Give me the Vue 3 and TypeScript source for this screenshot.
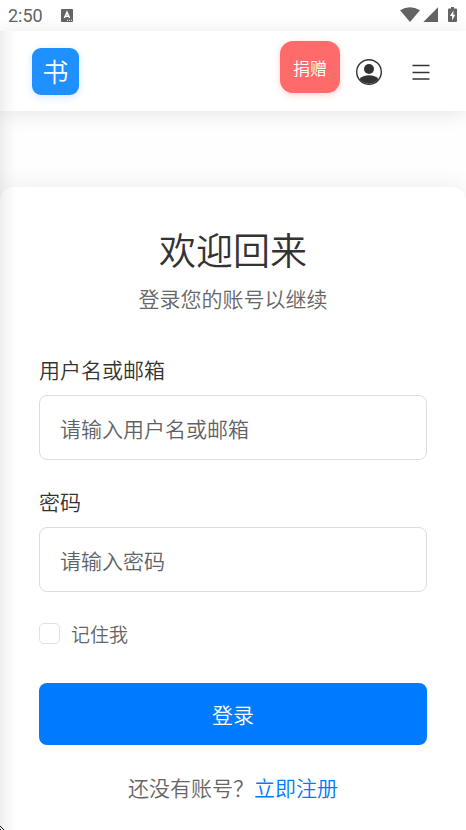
<script setup lang="ts">
import { ref } from 'vue'

const account = ref('')
const password = ref('')
const remember = ref(false)
</script>

<template>
  <div class="screen">
    <div class="status">
      <span class="time">2:50</span>
      <svg class="notice" width="12" height="13" viewBox="0 0 12 13" aria-hidden="true">
        <rect width="12" height="13" rx="1" fill="#646464" />
        <path d="M3.4 9 6 3.2 8.6 9M4.4 7.2h3.2" fill="none" stroke="#fff" stroke-width="1.5" />
        <path d="M6 11.3h1M8 11.3h1M10 11.3h1" stroke="#fff" stroke-width="1" />
      </svg>
      <svg class="signals" width="60" height="18" viewBox="0 0 60 18" aria-hidden="true">
        <g fill="#646464">
          <path d="M0 3.3Q10 -2.7 20 3.3L10 15Z" />
          <path d="M38 .2V15H23.4Z" />
          <path d="M51 0h3v1.6h2q1 0 1 1V14q0 1-1 1h-7q-1 0-1-1V2.6q0-1 1-1h2Z" />
        </g>
        <path d="M53.5 3.6 49.9 9h2.2v4.4L55.3 7.8h-2Z" fill="#fff" />
      </svg>
    </div>

    <div class="page">
      <header class="topbar">
        <a class="logo" href="#">书</a>
        <nav class="actions">
          <button class="donate" type="button">捐赠</button>
          <button class="icon-button" type="button" aria-label="账号">
            <svg width="26" height="26" viewBox="0 0 26 26">
              <circle cx="13" cy="13" r="12.3" fill="#fff" stroke="#333" stroke-width="1.4" />
              <circle cx="13" cy="10" r="5" fill="#333" />
              <path d="M3.5 20.2C5.6 17.4 9 16.3 13 16.3S20.4 17.4 22.5 20.2A12.4 12.4 0 0 1 3.5 20.2Z" fill="#333" />
            </svg>
          </button>
          <button class="icon-button menu" type="button" aria-label="菜单">
            <svg width="18" height="16" viewBox="0 0 18 16">
              <path d="M.5 1.5h17M.5 8.5h17M.5 15h17" stroke="#333" stroke-width="1.5" />
            </svg>
          </button>
        </nav>
      </header>

      <main class="card">
        <h1>欢迎回来</h1>
        <p class="subtitle">登录您的账号以继续</p>
        <form @submit.prevent>
          <div class="field">
            <label for="account">用户名或邮箱</label>
            <input id="account" v-model="account" type="text" placeholder="请输入用户名或邮箱" />
          </div>
          <div class="field">
            <label for="password">密码</label>
            <input id="password" v-model="password" type="password" placeholder="请输入密码" />
          </div>
          <div class="remember">
            <input id="remember" v-model="remember" type="checkbox" />
            <label for="remember">记住我</label>
          </div>
          <button class="submit" type="submit">登录</button>
        </form>
        <p class="signup">还没有账号？<a href="#">立即注册</a></p>
      </main>
      <svg class="corner" width="4" height="4" viewBox="0 0 4 4" aria-hidden="true">
        <path d="M0 0h1v1h1v1h1v1h1v1H3V3H2V2H1V1H0ZM0 3h1v1H0Z" fill="#111" />
      </svg>
    </div>
  </div>
</template>

<style>
body {
  margin: 0;
  background: #fff;
}
</style>

<style scoped>
* {
  box-sizing: border-box;
}

.screen {
  display: flex;
  flex-direction: column;
  min-height: 100vh;
  overflow: hidden;
  color: #333;
  font-family: "Noto Sans CJK SC", sans-serif;
  font-size: 21px;
  font-weight: 350;
}

button,
input {
  font: inherit;
}

.status {
  display: flex;
  align-items: center;
  height: 31px;
  padding: 0 6px 0 8px;
  color: #646464;
  font-family: Roboto, sans-serif;
  font-size: 18px;
  font-weight: 400;
}

.notice {
  margin-left: 18px;
}

.signals {
  margin-left: auto;
}

.page {
  position: relative;
  display: flex;
  flex: 1;
  flex-direction: column;
  gap: 76px;
  background: #fefefe;
}

.page::before {
  position: absolute;
  z-index: 3;
  top: 0;
  bottom: 0;
  left: 0;
  width: 18px;
  background: linear-gradient(to right, rgb(0 0 0 / 7%), rgb(0 0 0 / 4%) 30%, rgb(0 0 0 / 1%) 70%, transparent);
  content: "";
  pointer-events: none;
}

.topbar {
  display: flex;
  z-index: 2;
  align-items: center;
  justify-content: space-between;
  height: 80px;
  padding: 0 32px;
  background: #fff;
  box-shadow: 0 2px 20px rgb(0 0 0 / 10%);
}

.logo {
  display: grid;
  width: 47px;
  height: 47px;
  place-items: center;
  border-radius: 9px;
  background: #1e90ff;
  box-shadow: 0 2px 8px rgb(30 144 255 / 20%);
  color: #fff;
  font-size: 26px;
  line-height: 1;
  text-decoration: none;
}

.actions {
  display: flex;
  align-items: center;
  padding-top: 2px;
}

.donate {
  height: 52px;
  margin: 0 16px 10px 0;
  padding: 0 13px;
  border: 0;
  border-radius: 13px;
  background: #ff6b6b;
  box-shadow: 0 2px 6px rgb(255 107 107 / 30%);
  color: #fff;
  font-size: 17px;
}

.icon-button {
  display: flex;
  padding: 0;
  border: 0;
  background: none;
}

.menu {
  margin: 0 4px 0 30px;
}

.card {
  flex: 1;
  padding: 34px 39px 24px;
  border-radius: 14px 14px 0 0;
  background: #fff;
  box-shadow: 0 0 24px rgb(0 0 0 / 8%);
}

h1,
p {
  margin: 0;
  text-align: center;
}

h1 {
  font-size: 37px;
  font-weight: 350;
  line-height: 56px;
}

.subtitle {
  margin-top: 5px;
  color: #666;
  line-height: 32px;
}

.field {
  display: flex;
  flex-direction: column;
  gap: 10px;
  margin-bottom: 25px;
}

form {
  margin-top: 39px;
}

.field label {
  line-height: 32px;
}

.field input {
  width: 100%;
  height: 65px;
  padding: 0 20px;
  border: 1px solid #ddd;
  border-radius: 8px;
  outline: 0;
  background: #fff;
  color: #333;
}

.field input::placeholder {
  color: #5f6368;
  opacity: 1;
}

.remember {
  display: flex;
  align-items: center;
  gap: 11px;
  height: 32px;
  color: #666;
  font-size: 19px;
}

.remember input {
  width: 21px;
  height: 21px;
  margin: 0;
  appearance: none;
  border: 1px solid #dee2e6;
  border-radius: 5px;
  background: #fff;
}

.remember input:checked {
  background: #007bff;
}

.submit {
  display: block;
  width: 100%;
  height: 62px;
  margin-top: 34px;
  padding: 0;
  border: 0;
  border-radius: 8px;
  background: #007bff;
  color: #fff;
}

.signup {
  margin-top: 26px;
  color: #666;
  line-height: 32px;
}

.signup a {
  color: #007bff;
  text-decoration: none;
}

.corner {
  position: absolute;
  z-index: 4;
  bottom: 0;
  left: 0;
}
</style>
